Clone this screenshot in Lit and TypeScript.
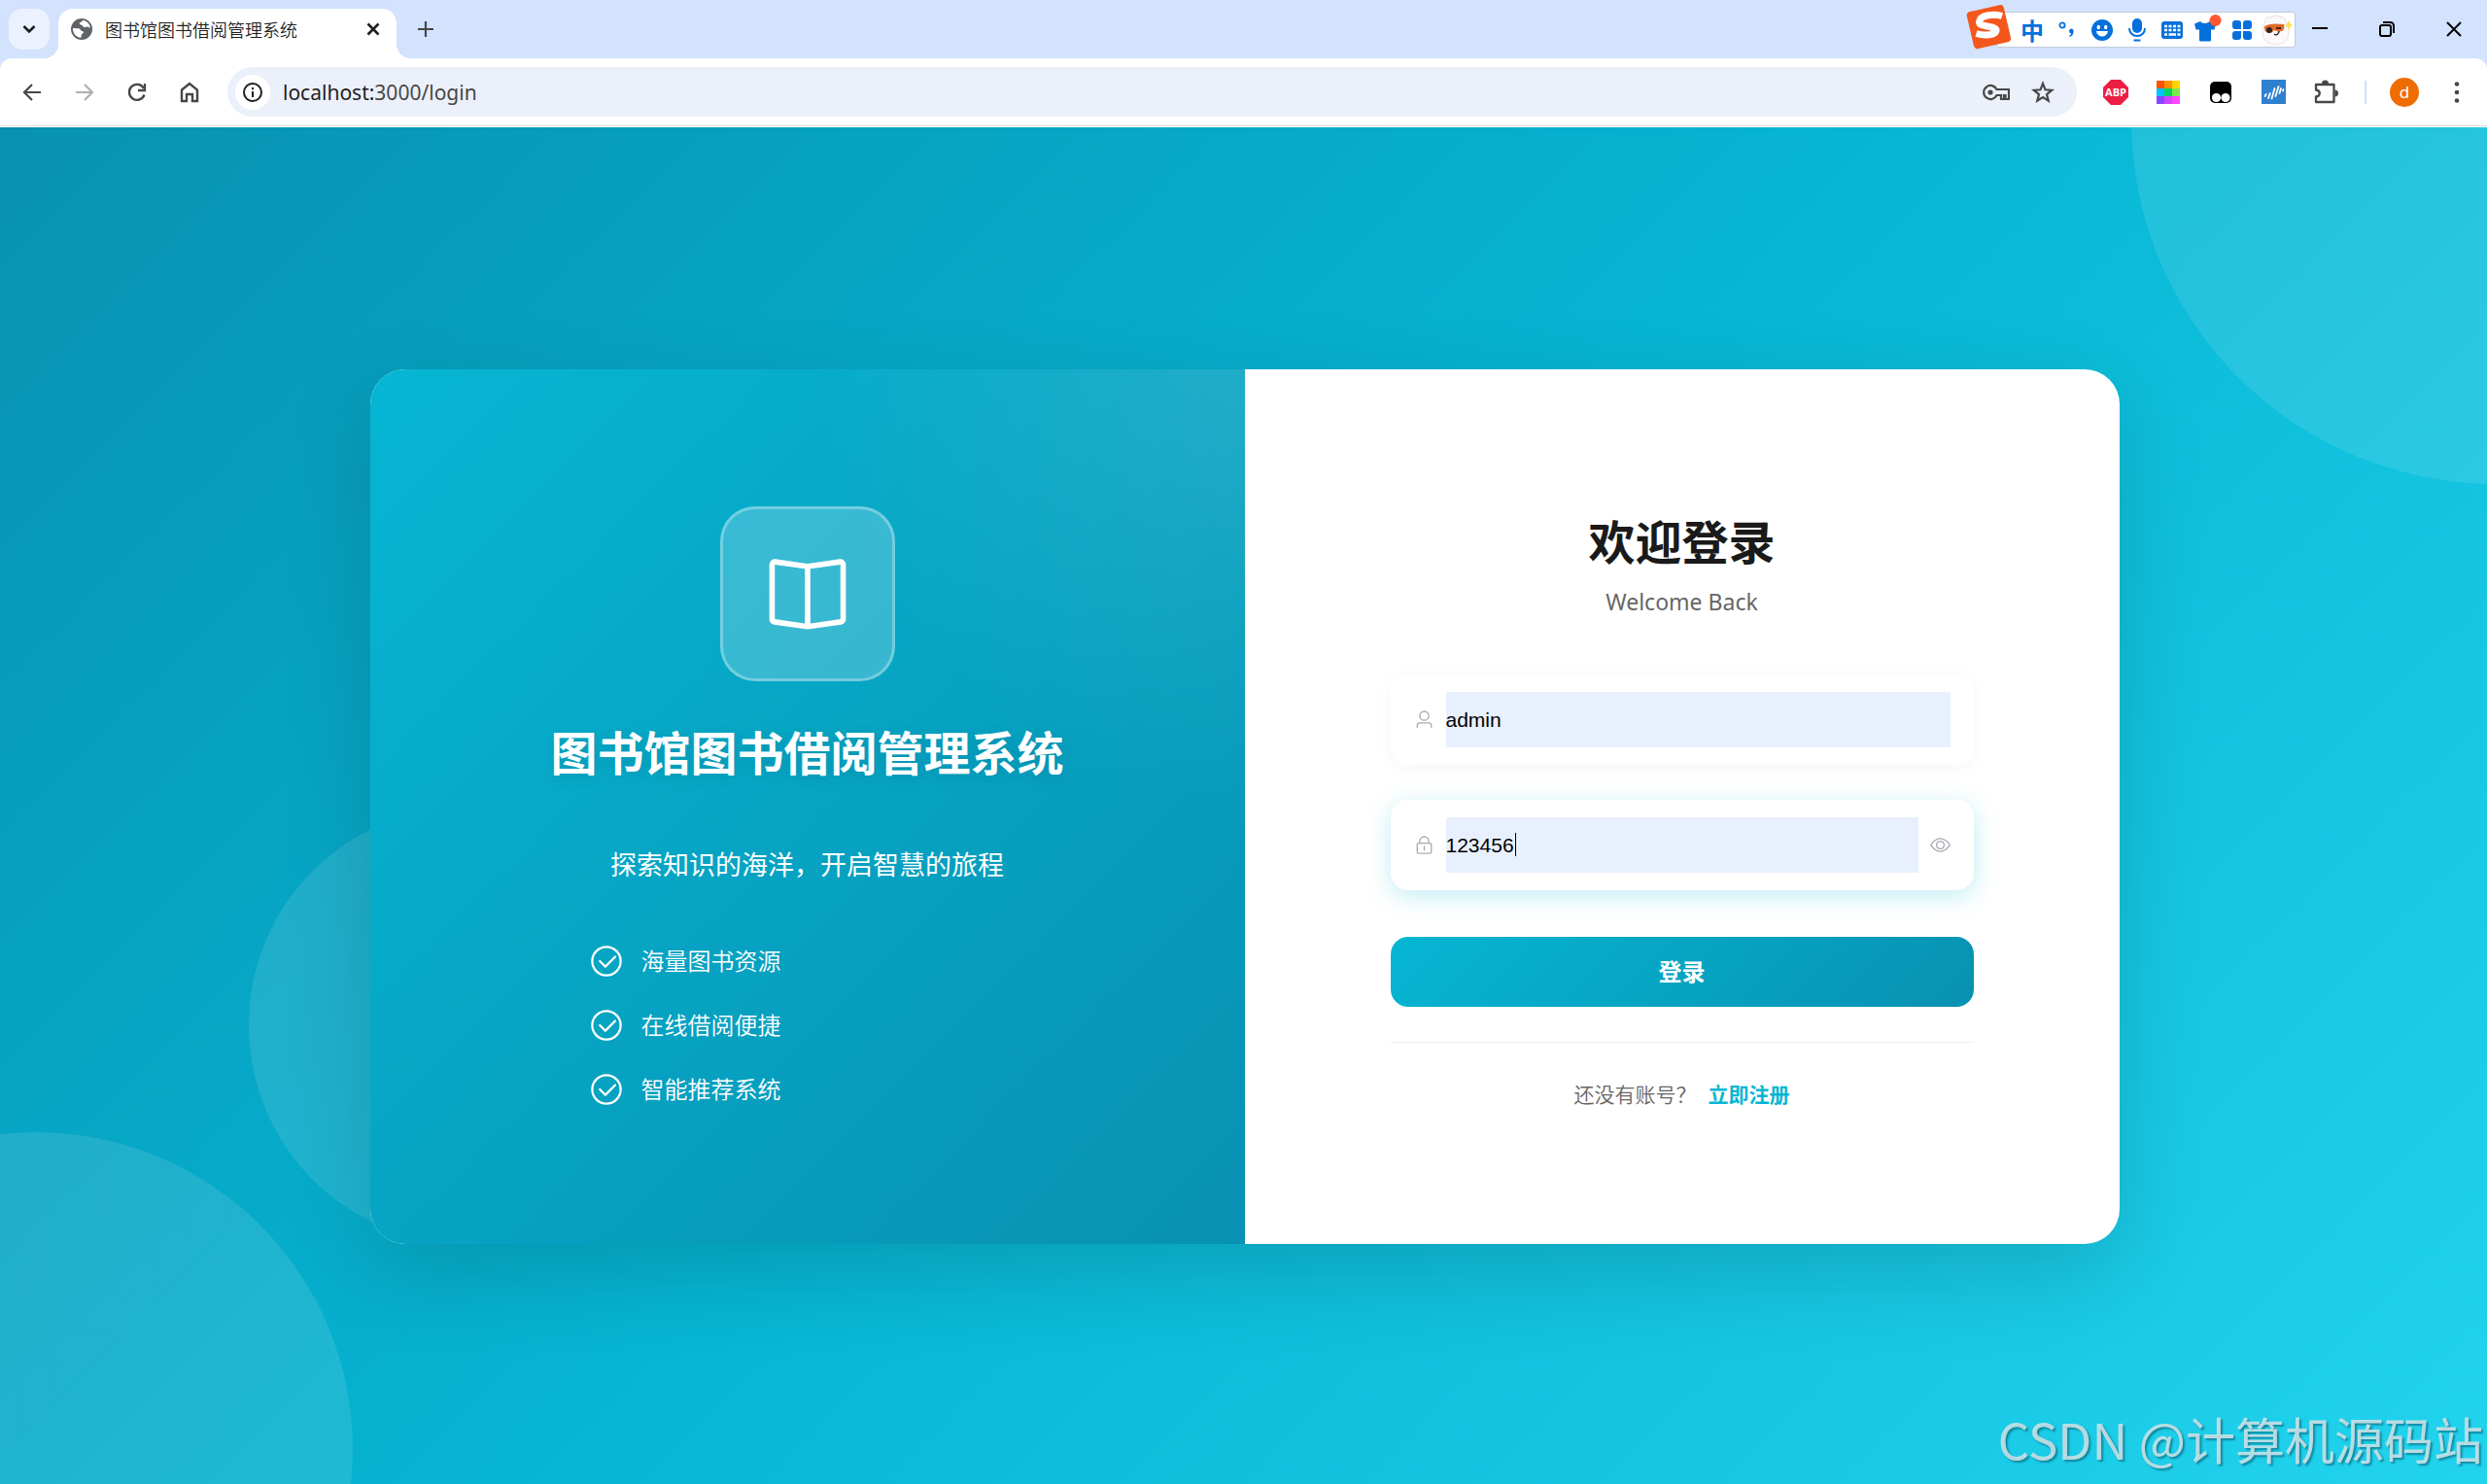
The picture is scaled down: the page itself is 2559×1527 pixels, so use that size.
import { LitElement, html, svg, css } from "lit";
import { customElement, state } from "lit/decorators.js";

const eyePath =
  "M512 160c320 0 512 352 512 352S832 864 512 864 0 512 0 512s192-352 512-352m0 64c-225.28 0-384.128 208.064-436.8 288 52.608 79.872 211.456 288 436.8 288 225.28 0 384.128-208.064 436.8-288-52.608-79.872-211.456-288-436.8-288m0 64a224 224 0 1 1 0 448 224 224 0 0 1 0-448m0 64a160.19 160.19 0 0 0-160 160c0 88.192 71.744 160 160 160s160-71.808 160-160-71.744-160-160-160";
const userPath =
  "M512 512a192 192 0 1 0 0-384 192 192 0 0 0 0 384m0 64a256 256 0 1 1 0-512 256 256 0 0 1 0 512m320 320v-96a96 96 0 0 0-96-96H288a96 96 0 0 0-96 96v96a32 32 0 1 1-64 0v-96a160 160 0 0 1 160-160h448a160 160 0 0 1 160 160v96a32 32 0 1 1-64 0";
const lockPath =
  "M224 448a32 32 0 0 0-32 32v384a32 32 0 0 0 32 32h576a32 32 0 0 0 32-32V480a32 32 0 0 0-32-32zm0-64h576a96 96 0 0 1 96 96v384a96 96 0 0 1-96 96H224a96 96 0 0 1-96-96V480a96 96 0 0 1 96-96M512 544a32 32 0 0 1 32 32v192a32 32 0 1 1-64 0V576a32 32 0 0 1 32-32m192-160v-64a192 192 0 1 0-384 0v64zM512 64a256 256 0 0 1 256 256v128H256V320A256 256 0 0 1 512 64";
const checkPath =
  "M512 896a384 384 0 1 0 0-768 384 384 0 0 0 0 768m0 64a448 448 0 1 1 0-896 448 448 0 0 1 0 896M745.344 361.344a32 32 0 0 1 45.312 45.312l-288 288a32 32 0 0 1-45.312 0l-160-160a32 32 0 1 1 45.312-45.312L480 626.752z";
const bookPath =
  "m512 863.36 384-54.848v-638.72L525.568 222.72a96 96 0 0 1-27.136 0L128 169.792v638.72zM137.024 106.432l370.432 52.928a32 32 0 0 0 9.088 0l370.432-52.928A64 64 0 0 1 960 169.792v638.72a64 64 0 0 1-54.976 63.36l-388.48 55.488a32 32 0 0 1-9.088 0l-388.48-55.488A64 64 0 0 1 64 808.512v-638.72a64 64 0 0 1 73.024-63.36zM480 192h64v704h-64z";

const glyph = (d: string, size: number) =>
  html`<svg width=${size} height=${size} viewBox="0 0 1024 1024" fill="currentColor" aria-hidden="true"><path d=${d}></path></svg>`;

@customElement("browser-tabs")
class BrowserTabs extends LitElement {
  static styles = css`
    :host { display: block; }
    .strip {
      position: relative;
      display: flex;
      align-items: flex-start;
      height: 60px;
      background: #d3e2fd;
      color: #1f1f1f;
      font-family: "Noto Sans CJK SC", sans-serif;
    }
    button {
      display: flex;
      align-items: center;
      justify-content: center;
      border: 0;
      padding: 0;
      background: none;
      color: inherit;
    }
    .search { width: 42px; height: 42px; margin: 9px; border-radius: 14px; background: #ebf1fe; }
    .tab {
      position: relative;
      display: flex;
      align-items: center;
      gap: 13px;
      box-sizing: border-box;
      width: 348px;
      height: 51px;
      margin-top: 9px;
      padding: 0 12px 9px 13px;
      border-radius: 15px 15px 0 0;
      background: #fff;
    }
    .tab::before, .tab::after {
      content: "";
      position: absolute;
      bottom: 0;
      width: 15px;
      height: 15px;
    }
    .tab::before { left: -15px; background: radial-gradient(circle at 0 0, transparent 15px, #fff 15px); }
    .tab::after { right: -15px; background: radial-gradient(circle at 100% 0, transparent 15px, #fff 15px); }
    .title { flex: 1; font-size: 18px; font-weight: 350; line-height: 22px; white-space: nowrap; }
    .close { width: 24px; height: 24px; }
    .add { width: 42px; height: 42px; margin: 9px; color: #474747; }
    .window { display: flex; margin-left: auto; color: #000; }
    .window button { width: 69px; height: 60px; }
    .ime {
      position: absolute;
      top: 12px;
      right: 197px;
      display: flex;
      align-items: center;
      box-sizing: border-box;
      height: 37px;
      padding-left: 18px;
      border: 1px solid #c0cbdc;
      border-radius: 3px;
      background: #fff;
      color: #0470dc;
    }
    .ime button { width: 36px; height: 35px; font: bold 24px/35px "Noto Sans CJK SC", sans-serif; }
    .sogou { position: absolute; left: -33px; top: -10px; }
  `;
  render() {
    return html`
      <header class="strip">
        <button class="search" aria-label="搜索标签页">
          <svg width="14" height="10" viewBox="0 0 14 10" fill="none" stroke="currentColor" stroke-width="2.6"><path d="M1.5 2 7 7.5 12.5 2"></path></svg>
        </button>
        <div class="tab">
          <svg width="22" height="22" viewBox="0 0 22 22" aria-hidden="true">
            <circle cx="11" cy="11" r="11" fill="#5f6368"></circle>
            <path d="M12 2c-1 1.500-1.500 2-3 2-.5 1.500.3 2.500 2 2.700 1.500.2 1 2 2.500 2.300 1.500.2 2.500-.8 4-.5l2.300 1.500c0-4-3-7.600-7.800-8z" fill="#fff"></path>
            <path d="M2 10c2.500.2 5 .2 6.500.6 1.800.6 1.200 2.400 3.300 2.500 1.700.2 1.500 2 .2 2.400-1.500.4-1.200 1.700-1.500 4.300C5.500 19.700 1.800 15.500 2 10z" fill="#fff"></path>
          </svg>
          <span class="title">图书馆图书借阅管理系统</span>
          <button class="close" aria-label="关闭标签页">
            <svg width="14" height="14" viewBox="0 0 14 14" stroke="currentColor" stroke-width="2.6"><path d="m1.500 1.500 11 11m0-11-11 11"></path></svg>
          </button>
        </div>
        <button class="add" aria-label="新建标签页">
          <svg width="16" height="16" viewBox="0 0 16 16" stroke="currentColor" stroke-width="2.200"><path d="M8 0v16M0 8h16"></path></svg>
        </button>
        <div class="window">
          <button aria-label="最小化"><svg width="16" height="16" viewBox="0 0 16 16"><path d="M0 6h16v2H0z"></path></svg></button>
          <button aria-label="还原"><svg width="16" height="16" viewBox="0 0 16 16" fill="none" stroke="currentColor" stroke-width="2"><rect x="1" y="4" width="11" height="11" rx="2"></rect><path d="M4 1h7.500A3.500 3.500 0 0 1 15 4.500V12"></path></svg></button>
          <button aria-label="关闭"><svg width="16" height="16" viewBox="0 0 16 16" stroke="currentColor" stroke-width="2"><path d="m1 1 14 14m0-14L1 15"></path></svg></button>
        </div>
        <div class="ime">
          <svg class="sogou" width="50" height="50" viewBox="0 0 50 50" aria-hidden="true">
            <rect x="5" y="5" width="39" height="39" rx="4" fill="#f4571b" transform="rotate(-13 25 25)"></rect>
            <path d="M38 13.500C30 11 15.500 12 14.500 19.500c-.6 6 18.500 3.500 17.500 9-1 5-12 5.500-20.500 3" fill="none" stroke="#fff" stroke-width="7"></path>
          </svg>
          <button aria-label="中文输入">中</button>
          <button aria-label="标点"><svg width="20" height="20" viewBox="0 0 20 20"><circle cx="5" cy="5" r="2.600" fill="none" stroke="currentColor" stroke-width="1.800"></circle><path d="M14 8.500a2.600 2.600 0 0 1 2.600 2.700c0 3-1.600 5-3.800 5.800l-.5-1.400c1-.5 1.700-1.300 1.800-2.200a2.500 2.500 0 0 1-.1-4.900z" fill="currentColor"></path></svg></button>
          <button aria-label="表情"><svg width="22" height="22" viewBox="0 0 22 22"><circle cx="11" cy="11" r="11" fill="currentColor"></circle><ellipse cx="7.300" cy="8" rx="1.700" ry="2.200" fill="#fff"></ellipse><ellipse cx="14.700" cy="8" rx="1.700" ry="2.200" fill="#fff"></ellipse><path d="M5 12h12c-.5 3.600-3 5.500-6 5.500S5.500 15.600 5 12z" fill="#fff"></path></svg></button>
          <button aria-label="语音"><svg width="20" height="24" viewBox="0 0 20 24" fill="none" stroke="currentColor" stroke-width="2"><rect x="6" y="1" width="8" height="13" rx="4" fill="currentColor"></rect><path d="M2 10c0 4.500 3.300 8 8 8s8-3.500 8-8M6.500 22.500h7"></path></svg></button>
          <button aria-label="键盘"><svg width="24" height="20" viewBox="0 0 24 20"><rect x="1" y="1" width="22" height="18" rx="3" fill="currentColor"></rect><path d="M4 6h3M8.500 6h3M13 6h3M17.500 6h3M4 10h3M8.500 10h3M13 10h3M17.500 10h3M4 14.500h3M8.500 14.500h7.500M17.500 14.500h3" stroke="#fff" stroke-width="2.600"></path></svg></button>
          <button aria-label="皮肤"><svg width="30" height="32" viewBox="0 0 30 32"><path d="M8 7c1.500 2.500 7.500 2.500 9.500 0l6.500 2.500-1.500 6h-3.500V26c0 1-.5 1.500-1.500 1.500h-9C7.500 27.500 7 27 7 26V15.500H3.500L2 9.500z" fill="currentColor"></path><circle cx="23.500" cy="6" r="6" fill="#ff5730"></circle></svg></button>
          <button aria-label="工具箱"><svg width="20" height="20" viewBox="0 0 20 20" fill="currentColor"><path d="M3 0h3c2 0 3 1 3 3v6H3C1 9 0 8 0 6V3c0-2 1-3 3-3zM11 3c0-2 1-3 3-3h3c2 0 3 1 3 3v3c0 2-1 3-3 3h-6zM3 11h6v6c0 2-1 3-3 3H3c-2 0-3-1-3-3v-3c0-2 1-3 3-3zM11 11h6c2 0 3 1 3 3v3c0 2-1 3-3 3h-3c-2 0-3-1-3-3z"></path></svg></button>
          <button aria-label="助手"><svg width="32" height="34" viewBox="0 0 32 34"><path d="M15 2c3 0 4 2 8 2 2 4 5 9 5 15 0 8-5 13-13 13S1 27 1 19C1 12 4 9 5 4c4 1 6-2 10-2z" fill="#fbf9fa" stroke="#ecdfe1"></path><path d="M3 13c5-3 13-3 20-2 1 3 0 6-2 7-4 1-6 0-8-1-2 3-6 4-8 2-2-1-2-4-2-6z" fill="#e3692b"></path><circle cx="8" cy="17" r="3" fill="#2f2320"></circle><path d="M15 15h5" stroke="#4a2414" stroke-width="2"></path><path d="M13 21c2 2 5 0 5-3" fill="none" stroke="#333" stroke-width="1.500"></path><path d="m28 7 1.500 3.500L32 12l-2.500 1.500L28 17l-1.500-3.500L24 12l2.500-1.500z" fill="#ffe04d"></path></svg></button>
        </div>
      </header>
    `;
  }
}

@customElement("browser-toolbar")
class BrowserToolbar extends LitElement {
  static styles = css`
    :host { display: block; background: #d3e2fd; }
    .bar {
      display: flex;
      align-items: center;
      box-sizing: border-box;
      height: 70px;
      padding: 0 4px 0 6px;
      border-bottom: 1px solid #dcdfdc;
      border-radius: 12px 12px 0 0;
      background: #fff;
      color: #474747;
    }
    .frame { padding-bottom: 1px; background: linear-gradient(#d3e2fd 20px, #fff 20px); }
    button {
      display: flex;
      align-items: center;
      justify-content: center;
      width: 54px;
      height: 51px;
      border: 0;
      padding: 0;
      background: none;
      color: inherit;
    }
    .off { color: #b0b0b0; }
    .omnibox {
      flex: 1;
      display: flex;
      align-items: center;
      height: 51px;
      margin: 0 13px 0 12px;
      padding: 0 11px 0 8px;
      box-sizing: border-box;
      border-radius: 26px;
      background: #ecf0fa;
    }
    .omnibox button { width: 48px; }
    .omnibox .info { width: 36px; height: 36px; margin-right: 13px; border-radius: 50%; background: #fff; color: #1f1f1f; }
    .url { flex: 1; font: 21px/30px "Noto Sans", sans-serif; }
    .host { color: #1f1f1f; }
    .divider { width: 27px; display: flex; justify-content: center; }
    .divider::before { content: ""; width: 2px; height: 24px; background: #d3e2fd; }
    .avatar span {
      width: 30px;
      height: 30px;
      border-radius: 50%;
      background: #ef6c00;
      color: #fff;
      font: 17px/29px "Noto Sans", sans-serif;
      text-align: center;
    }
  `;
  render() {
    const swatches = ["#ff5200", "#ff9000", "#ffd400", "#00c0ff", "#00d264", "#7ee84e", "#8a44ff", "#cf44ff", "#ff44ff"];
    return html`
      <div class="frame">
        <nav class="bar">
          <button aria-label="后退"><svg width="20" height="20" viewBox="0 0 20 20" fill="none" stroke="currentColor" stroke-width="2.200"><path d="M19 10H2.500M10 2l-8 8 8 8"></path></svg></button>
          <button class="off" aria-label="前进"><svg width="20" height="20" viewBox="0 0 20 20" fill="none" stroke="currentColor" stroke-width="2.200"><path d="M1 10h16.500M10 2l8 8-8 8"></path></svg></button>
          <button aria-label="重新加载"><svg width="20" height="20" viewBox="0 0 20 20" fill="none" stroke="currentColor" stroke-width="2.300"><path d="M17.500 12.500A8 8 0 1 1 17 6"></path><path d="M18 1v7h-7" ></path></svg></button>
          <button aria-label="主页"><svg width="20" height="22" viewBox="0 0 20 22" fill="none" stroke="currentColor" stroke-width="2.400"><path d="M2 8.500 10 2l8 6.500V20h-5v-7H7v7H2z"></path></svg></button>
          <div class="omnibox">
            <button class="info" aria-label="网站信息"><svg width="22" height="22" viewBox="0 0 22 22" fill="none" stroke="currentColor" stroke-width="2"><circle cx="11" cy="11" r="9"></circle><path d="M11 10v6M11 6v2.200"></path></svg></button>
            <div class="url"><span class="host">localhost:</span>3000/login</div>
            <button aria-label="密码"><svg width="28" height="18" viewBox="0 0 28 18" fill="none" stroke="currentColor" stroke-width="2.200"><path d="M14.500 6A7 7 0 1 0 14.500 12H19v4h3v-4h1.500v4H27V6z"></path><circle cx="8" cy="9" r="2.600" fill="currentColor" stroke="none"></circle></svg></button>
            <button aria-label="收藏"><svg width="24" height="24" viewBox="0 0 24 24" fill="none" stroke="currentColor" stroke-width="2.200"><path d="m12 3 2.500 6.300 6.700.5-5.200 4.300 1.700 6.600L12 17.100l-5.700 3.600L8 14.100 2.800 9.800l6.700-.5z"></path></svg></button>
          </div>
          <button aria-label="广告拦截"><svg width="26" height="26" viewBox="0 0 26 26"><path d="M8 0h10l8 8v10l-8 8H8l-8-8V8z" fill="#ed1e45"></path><text x="13" y="17" text-anchor="middle" font-family="Open Sans, sans-serif" font-weight="bold" font-size="11" fill="#fff">ABP</text></svg></button>
          <button aria-label="取色"><svg width="24" height="24" viewBox="0 0 24 24">${swatches.map((c, i) => svg`<rect x=${(i % 3) * 8} y=${Math.floor(i / 3) * 8} width="8" height="8" fill=${c}></rect>`)}</svg></button>
          <button aria-label="脚本"><svg width="24" height="24" viewBox="0 0 24 24"><rect x="1" y="1" width="22" height="22" rx="5" fill="#000"></rect><circle cx="7.500" cy="17.500" r="4.600" fill="#fff"></circle><circle cx="17" cy="17.500" r="4.600" fill="#fff"></circle></svg></button>
          <button aria-label="统计"><svg width="25" height="25" viewBox="0 0 25 25"><path d="M0 0h25v25H0z" fill="#3080d0"></path><path d="m3.500 17 1.200-2M7 19l1.800-5M10.500 19.500 13.500 9M14.500 17l3-10M18.500 14l1.500-5M22 11.500l.5-1.500" stroke="#fff" stroke-width="1.800" stroke-linecap="round"></path></svg></button>
          <button aria-label="扩展程序"><svg width="26" height="26" viewBox="0 0 26 26" fill="none" stroke="currentColor" stroke-width="2.300"><path d="M3 5h18.500v18H3v-5.500c5-.5 5-6.500 0-7z" stroke-linejoin="round"></path><path d="M9 4a3.500 3.500 0 0 1 7 0zM22.500 10.500a3.500 3.500 0 0 1 0 7z" fill="currentColor" stroke="none"></path></svg></button>
          <span class="divider"></span>
          <button class="avatar" aria-label="用户"><span>d</span></button>
          <button aria-label="菜单"><svg width="6" height="22" viewBox="0 0 6 22" fill="currentColor"><circle cx="3" cy="2.500" r="2.300"></circle><circle cx="3" cy="11" r="2.300"></circle><circle cx="3" cy="19.500" r="2.300"></circle></svg></button>
        </nav>
      </div>
    `;
  }
}

@customElement("login-page")
class LoginPage extends LitElement {
  @state() private reveal = true;

  static styles = css`
    :host { display: flex; flex-direction: column; }
    .page {
      position: relative;
      flex: 1;
      display: flex;
      align-items: center;
      justify-content: center;
      padding: 32px 30px 30px 32px;
      overflow: hidden;
      background: linear-gradient(135deg, #0891b2 0%, #06b6d4 50%, #22d3ee 100%);
      font-family: "Noto Sans", "Noto Sans CJK SC", sans-serif;
    }
    .circle { position: absolute; border-radius: 50%; background: rgba(255, 255, 255, 0.1); }
    .one { width: 750px; height: 750px; top: -383px; right: -384px; }
    .two { width: 652px; height: 652px; bottom: -290px; left: -289px; }
    .three { width: 450px; height: 450px; bottom: 247px; left: 10%; }
    .card {
      position: relative;
      display: grid;
      grid-template-columns: 1fr 1fr;
      width: 100%;
      max-width: 1800px;
      min-height: 900px;
      overflow: hidden;
      border-radius: 36px;
      background: #fff;
      box-shadow: 0 30px 90px rgba(0, 0, 0, 0.15);
    }
    .brand {
      position: relative;
      display: flex;
      flex-direction: column;
      align-items: center;
      justify-content: center;
      overflow: hidden;
      background: linear-gradient(135deg, #06b6d4 0%, #0891b2 100%);
      color: #fff;
    }
    .brand::before {
      content: "";
      position: absolute;
      top: -50%;
      right: -50%;
      width: 100%;
      height: 100%;
      background: radial-gradient(circle, rgba(255, 255, 255, 0.1) 0%, transparent 70%);
    }
    .logo {
      display: flex;
      align-items: center;
      justify-content: center;
      box-sizing: border-box;
      width: 180px;
      height: 180px;
      margin-bottom: 36px;
      border: 3px solid rgba(255, 255, 255, 0.3);
      border-radius: 36px;
      background: rgba(255, 255, 255, 0.2);
    }
    h1, h2, p, ul { margin: 0; padding: 0; }
    h1 { margin-bottom: 56px; font-size: 48px; line-height: 76px; text-shadow: 0 3px 15px rgba(0, 0, 0, 0.1); }
    .slogan { margin-bottom: 60px; font-size: 27px; line-height: 42px; }
    .features { display: flex; flex-direction: column; gap: 30px; width: 450px; list-style: none; }
    .features li { display: flex; align-items: center; gap: 18px; height: 36px; font-size: 24px; font-weight: 350; line-height: 36px; }
    .panel { display: flex; flex-direction: column; justify-content: center; align-items: center; }
    .inner { width: 600px; }
    h2 { color: #1a1a1a; font-size: 48px; line-height: 84px; text-align: center; }
    .welcome { margin-bottom: 56px; color: #666; font-size: 23px; line-height: 38px; text-align: center; }
    .field {
      display: flex;
      align-items: center;
      gap: 12px;
      box-sizing: border-box;
      height: 93px;
      margin-bottom: 36px;
      padding: 0 24px;
      border-radius: 18px;
      box-shadow: 0 3px 18px rgba(0, 0, 0, 0.04);
      color: #a8abb2;
    }
    .field.active { margin-bottom: 48px; box-shadow: 0 6px 24px rgba(6, 182, 212, 0.25); }
    .field label, .field button { display: flex; padding: 0; border: 0; background: none; color: inherit; }
    .entry { position: relative; flex: 1; display: flex; }
    .entry input {
      width: 100%;
      height: 57px;
      box-sizing: border-box;
      padding: 0;
      border: 0;
      border-radius: 0;
      outline: none;
      background: #e8f0fe;
      color: #000;
      font: 21px/30px "Liberation Sans", Arial, sans-serif;
    }
    .caret { position: absolute; left: 71px; top: 16px; width: 1px; height: 24px; background: #000; }
    .submit {
      display: block;
      width: 100%;
      height: 72px;
      border: 0;
      border-radius: 18px;
      background: linear-gradient(135deg, #06b6d4 0%, #0891b2 100%);
      color: #fff;
      padding: 0 0 2px;
      font: bold 24px/36px "Noto Sans CJK SC", sans-serif;
    }
    .footer {
      display: flex;
      justify-content: center;
      gap: 12px;
      margin-top: 36px;
      padding-top: 36px;
      border-top: 1px solid #eee;
      color: #666;
      font-size: 21px;
      font-weight: 350;
      line-height: 35px;
    }
    .footer a { color: #06b6d4; font-weight: bold; text-decoration: none; }
    .watermark {
      position: absolute;
      right: 4px;
      bottom: 9px;
      color: rgba(205, 226, 230, 0.88);
      font: 400 51px/76px "Noto Sans CJK SC", sans-serif;
      text-shadow: 2px 2px 2px rgba(0, 70, 90, 0.5);
      white-space: nowrap;
    }
  `;

  render() {
    return html`
      <main class="page">
        <div class="circle one"></div>
        <div class="circle two"></div>
        <div class="circle three"></div>
        <section class="card">
          <div class="brand">
            <div class="logo">${glyph(bookPath, 90)}</div>
            <h1>图书馆图书借阅管理系统</h1>
            <p class="slogan">探索知识的海洋，开启智慧的旅程</p>
            <ul class="features">
              ${["海量图书资源", "在线借阅便捷", "智能推荐系统"].map((t) => html`<li>${glyph(checkPath, 36)}<span>${t}</span></li>`)}
            </ul>
          </div>
          <div class="panel">
            <form class="inner" @submit=${(e: Event) => e.preventDefault()}>
              <h2>欢迎登录</h2>
              <p class="welcome">Welcome Back</p>
              <div class="field">
                <label for="username" aria-label="用户名">${glyph(userPath, 21)}</label>
                <div class="entry"><input id="username" aria-label="用户名" type="text" value="admin" /></div>
              </div>
              <div class="field active">
                <label for="password" aria-label="密码">${glyph(lockPath, 21)}</label>
                <div class="entry">
                  <input id="password" aria-label="密码" type=${this.reveal ? "text" : "password"} value="123456" />
                  <span class="caret"></span>
                </div>
                <button type="button" aria-label="显示密码" @click=${() => (this.reveal = !this.reveal)}>${glyph(eyePath, 21)}</button>
              </div>
              <button class="submit" type="submit">登录</button>
              <div class="footer"><span>还没有账号？</span><a href="#register">立即注册</a></div>
            </form>
          </div>
        </section>
        <div class="watermark">CSDN @计算机源码站</div>
      </main>
    `;
  }
}

@customElement("app-root")
class AppRoot extends LitElement {
  static styles = css`
    :host { display: flex; flex-direction: column; min-height: 100vh; }
    login-page { flex: 1; }
  `;
  render() {
    return html`
      <browser-tabs></browser-tabs>
      <browser-toolbar></browser-toolbar>
      <login-page></login-page>
    `;
  }
}
